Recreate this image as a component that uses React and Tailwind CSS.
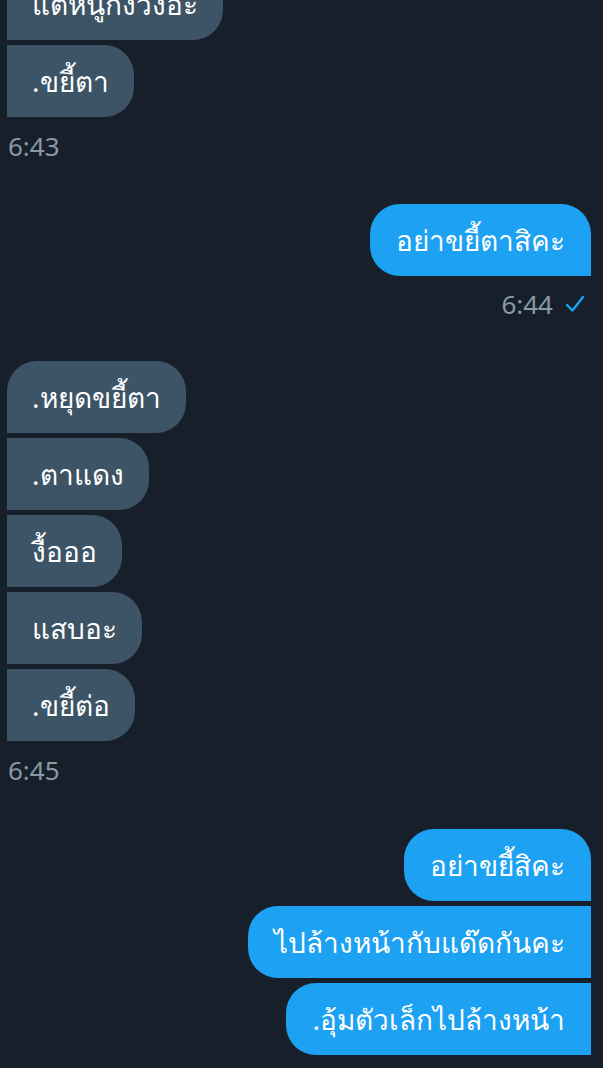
import React from 'react'

const font = { fontFamily: '"Noto Sans", Roboto, "DejaVu Sans", sans-serif' }

function Received({ text, first }) {
  return (
    <div
      className={
        'h-[72px] flex items-center px-[25px] bg-[#3d5466] text-white text-[28px] rounded-r-[30px] ' +
        (first ? 'rounded-tl-[30px]' : '')
      }
    >
      {text}
    </div>
  )
}

function Sent({ text, first }) {
  return (
    <div
      className={
        'h-[72px] flex items-center px-[26px] bg-[#1da1f2] text-white text-[28px] rounded-l-[30px] ' +
        (first ? 'rounded-tr-[30px]' : '')
      }
    >
      {text}
    </div>
  )
}

function Time({ children, right, read }) {
  return (
    <div className={'flex items-center gap-[12px] text-[26px] leading-[30px] text-[#8899a6] ' + (right ? 'justify-end pr-[6px]' : 'pl-[1px]')}>
      <span>{children}</span>
      {read && (
        <svg width="20" height="18" viewBox="0 0 20 18" fill="none">
          <path d="M2 10 L7.5 15.5 L18 2" stroke="#1da1f2" strokeWidth="2.4" strokeLinecap="round" strokeLinejoin="round" />
        </svg>
      )}
    </div>
  )
}

export default function App() {
  return (
    <div className="w-[603px] h-[1068px] overflow-hidden bg-[#17202a] pl-[7px] pr-[12px]" style={font}>
      <div className="flex flex-col items-start gap-[5px] mt-[-32px]">
        <Received text="แต่หนูก็ง่วงอ่ะ" />
        <Received text=".ขยี้ตา" />
      </div>
      <div className="mt-[14px]">
        <Time>6:43</Time>
      </div>

      <div className="flex flex-col items-end mt-[43px]">
        <Sent text="อย่าขยี้ตาสิคะ" first />
      </div>
      <div className="mt-[13px]">
        <Time right read>6:44</Time>
      </div>

      <div className="flex flex-col items-start gap-[5px] mt-[42px]">
        <Received text=".หยุดขยี้ตา" first />
        <Received text=".ตาแดง" />
        <Received text="งื้อออ" />
        <Received text="แสบอะ" />
        <Received text=".ขยี้ต่อ" />
      </div>
      <div className="mt-[14px]">
        <Time>6:45</Time>
      </div>

      <div className="flex flex-col items-end gap-[5px] mt-[44px]">
        <Sent text="อย่าขยี้สิคะ" first />
        <Sent text="ไปล้างหน้ากับแด๊ดกันคะ" />
        <Sent text=".อุ้มตัวเล็กไปล้างหน้า" />
      </div>
    </div>
  )
}
